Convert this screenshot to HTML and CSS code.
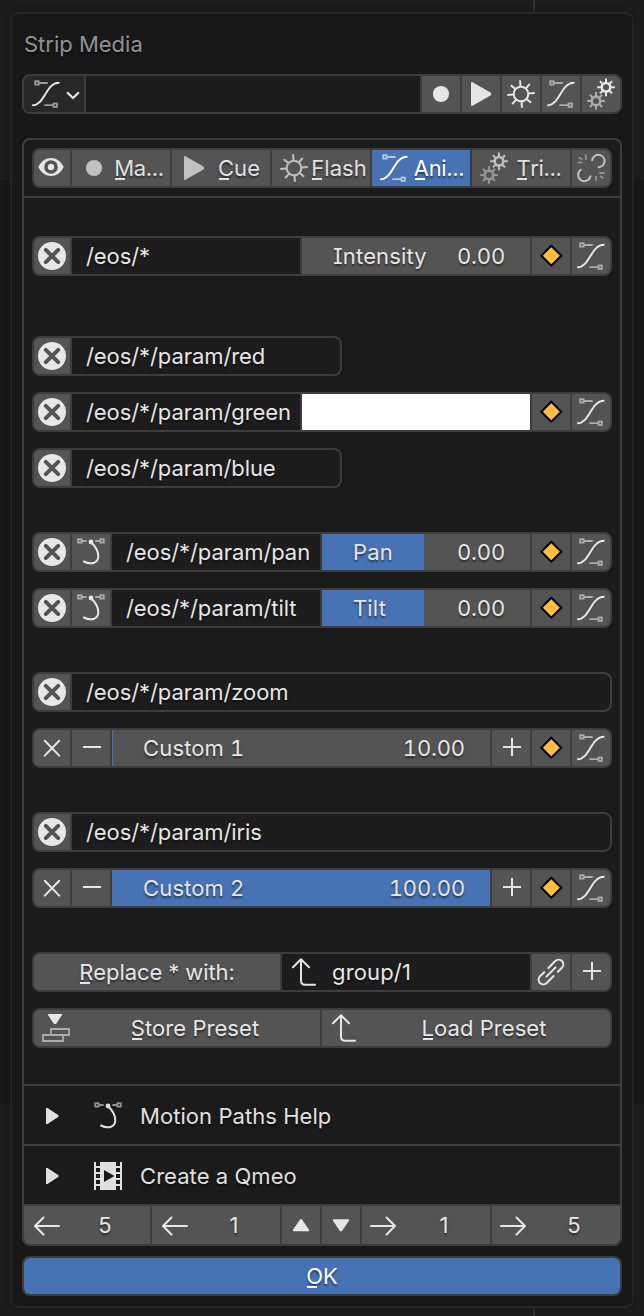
FILE: index.html
```html
<!DOCTYPE html>
<html lang="en">
<head>
<meta charset="utf-8">
<title>Strip Media</title>
<link rel="stylesheet" href="styles.css">
</head>
<body>
<svg class="defs" aria-hidden="true">
  <symbol id="curve" viewBox="0 0 38 36">
    <g class="dim"><rect x="8.2" y="5.2" width="3.4" height="3.4"/><path d="M12 7H20.7M17.3 29.2H26"/><rect x="26.5" y="27.5" width="3.4" height="3.4"/></g>
    <path class="line" d="M6 29.3C17 29.3 19.500 6.700 31.700 6.700"/>
  </symbol>
  <symbol id="handle" viewBox="0 0 38 36">
    <g class="dim"><rect x="6.2" y="5.2" width="3.4" height="3.4"/><path d="M10 7H14.7M23.3 7H28"/><rect x="28.4" y="5.2" width="3.4" height="3.4"/></g>
    <circle class="fill" cx="19" cy="8" r="2.4"/>
    <path class="line" d="M19 8C23 12 26.5 17.500 26.300 22.500C26 29.500 18.500 31 12 27.500"/>
  </symbol>
  <symbol id="dot" viewBox="0 0 38 36"><circle class="fill" cx="19" cy="18" r="8.100"/></symbol>
  <symbol id="play" viewBox="0 0 38 36"><path class="fill round" d="M10 7V29L28 18.700V17.300Z"/></symbol>
  <symbol id="sun" viewBox="0 0 38 36">
    <g class="line butt" transform="rotate(-4 19 18)"><circle cx="19" cy="18" r="7.300"/><path d="M19 10.500V4.200M19 25.500V31.800M11.500 18H5.200M26.500 18H32.800M13.700 12.700L9.500 8.500M24.300 12.700L28.500 8.500M13.700 23.300L9.500 27.500M24.300 23.300L28.500 27.500"/></g>
  </symbol>
  <symbol id="gears" viewBox="0 0 38 36">
    <g class="line butt"><circle cx="24" cy="11.300" r="4.300" stroke-width="2.600"/><path d="M24 6.500V2.400M24 16.100V20.200M19.200 11.300H15.100M28.800 11.300H32.900M20.600 7.900L17.900 5.200M27.400 7.900L30.100 5.200M20.600 14.700L17.900 17.400M27.400 14.700L30.100 17.400"/></g>
    <g class="line butt faded" transform="translate(-10 13.600)"><circle cx="24" cy="11.300" r="4.300" stroke-width="2.600"/><path d="M24 6.500V2.400M24 16.100V20.200M19.200 11.300H15.100M28.800 11.300H32.900M20.600 7.900L17.900 5.200M27.400 7.900L30.100 5.200M20.600 14.700L17.900 17.400M27.400 14.700L30.100 17.400"/></g>
  </symbol>
  <symbol id="unlinked" viewBox="0 0 38 36">
    <path class="line" d="M20.200 10.300A6.200 6.200 0 1 1 26.500 17.200M8.800 19.800A6.200 6.200 0 1 0 18.400 26.200"/>
    <path class="dim" d="M5.700 12.700H10.300M7 7.300L10.300 9.700M13.600 4.300L14 9.700M27.300 23H32.700M28 26L31.300 28.300M24 26V31"/>
  </symbol>
  <symbol id="eye" viewBox="0 0 36 36">
    <path class="fill" d="M4.300 17C10 5 24 5 29.700 17C24 29 10 29 4.300 17Z"/><circle class="hole" cx="17" cy="17" r="6.800"/><circle class="fill" cx="17" cy="17" r="3.200"/>
  </symbol>
  <symbol id="cancel" viewBox="0 0 36 36"><circle class="fill" cx="18" cy="18" r="14"/><path class="cross" d="M11.800 11.800L24.200 24.200M24.200 11.800L11.800 24.200"/></symbol>
  <symbol id="close" viewBox="0 0 36 36"><path class="line" d="M10.800 10.800L25.200 25.600M25.200 10.800L10.800 25.600"/></symbol>
  <symbol id="minus" viewBox="0 0 38 36"><path class="line butt" d="M11 17H29"/></symbol>
  <symbol id="plus" viewBox="0 0 38 36"><path class="line butt" d="M11 17H29M20 8V26"/></symbol>
  <symbol id="key" viewBox="0 0 38 36"><path class="key" d="M19.300 7.700L29.300 17.700L19.300 27.700L9.300 17.700Z"/></symbol>
  <symbol id="turn" viewBox="0 0 38 36"><path class="line" d="M11 13.300L19 5.200L27 13.300M19 5.500V26.500Q19 30.800 23.300 30.800H33"/></symbol>
  <symbol id="link" viewBox="0 0 38 36"><g class="line" transform="translate(19 18) rotate(-45)"><path d="M-6.500 0H6.500M1 -4.700H10.800A4.700 4.700 0 0 1 10.800 4.700H5M-1 4.700H-10.800A4.700 4.700 0 0 1 -10.800 -4.700H-5"/></g></symbol>
  <symbol id="store" viewBox="0 0 36 36"><path class="fill" d="M14 4H28V5L22 14H20L14 5Z"/><path class="dim" d="M17 24V19H35V25H30M9 25H29V31H9Z"/></symbol>
  <symbol id="film" viewBox="0 0 28 28"><path class="fill" d="M0 0H2V4H6V0H22V4H26V0H28V28H26V24H22V28H6V24H2V28H0ZM2 6V10H6V6ZM2 12V16H6V12ZM2 18V22H6V18ZM22 6V10H26V6ZM22 12V16H26V12ZM22 18V22H26V18ZM10 8V20L20.500 14Z" fill-rule="evenodd"/></symbol>
  <symbol id="left" viewBox="0 0 36 38"><path class="line" d="M35 20H11M19.500 11.500L11 20L19.500 28.500"/></symbol>
  <symbol id="right" viewBox="0 0 36 38"><path class="line" d="M9 20H33M24.500 11.500L33 20L24.500 28.500"/></symbol>
  <symbol id="up" viewBox="0 0 38 38"><path class="fill" d="M11 25.300V23.800L18.200 13.300H19.800L27 23.800V25.300Z"/></symbol>
  <symbol id="down" viewBox="0 0 38 38"><path class="fill" d="M11 13.300V14.800L18.200 25.300H19.800L27 14.800V13.300Z"/></symbol>
  <symbol id="disclose" viewBox="0 0 14 16"><path class="fill" d="M0 0H1.500L12.500 7.200V8.800L1.500 16H0Z"/></symbol>
  <symbol id="chevron" viewBox="0 0 14 10"><path class="line thick" d="M1.800 2L7 7L12.200 2"/></symbol>
</svg>

<div class="backdrop">
<main class="dialog">
  <h1 class="title">Strip Media</h1>

  <div class="row name-row">
    <div class="cell dropdown"><svg class="ico"><use href="#curve"/></svg><svg class="chev"><use href="#chevron"/></svg></div>
    <div class="cell field"></div>
    <div class="cell sq"><svg class="ico"><use href="#dot"/></svg></div>
    <div class="cell sq"><svg class="ico"><use href="#play"/></svg></div>
    <div class="cell sq"><svg class="ico"><use href="#sun"/></svg></div>
    <div class="cell sq"><svg class="ico"><use href="#curve"/></svg></div>
    <div class="cell sq"><svg class="ico"><use href="#gears"/></svg></div>
  </div>

  <section class="box">
    <div class="tabs-wrap">
      <div class="row">
        <div class="cell first"><svg class="ico edge"><use href="#eye"/></svg></div>
        <div class="cell tab clipped"><svg class="ico"><use href="#dot"/></svg><span><u>M</u>a...</span></div>
        <div class="cell tab"><svg class="ico"><use href="#play"/></svg><span><u>C</u>ue</span></div>
        <div class="cell tab"><svg class="ico"><use href="#sun"/></svg><span><u>F</u>lash</span></div>
        <div class="cell tab clipped active"><svg class="ico"><use href="#curve"/></svg><span><u>A</u>ni...</span></div>
        <div class="cell tab clipped"><svg class="ico"><use href="#gears"/></svg><span><u>T</u>ri...</span></div>
        <div class="cell sq muted"><svg class="ico"><use href="#unlinked"/></svg></div>
      </div>
    </div>

    <div class="params">
      <div class="group spaced">
        <div class="row">
          <div class="cell first"><svg class="ico edge"><use href="#cancel"/></svg></div>
          <div class="cell field">/eos/*</div>
          <div class="cell slider w228"><span>Intensity</span><span class="value">0.00</span></div>
          <div class="cell sq"><svg class="ico"><use href="#key"/></svg></div>
          <div class="cell sq"><svg class="ico"><use href="#curve"/></svg></div>
        </div>
      </div>

      <div class="group">
        <div class="row short">
          <div class="cell first"><svg class="ico edge"><use href="#cancel"/></svg></div>
          <div class="cell field">/eos/*/param/red</div>
        </div>
        <div class="row">
          <div class="cell first"><svg class="ico edge"><use href="#cancel"/></svg></div>
          <div class="cell field">/eos/*/param/green</div>
          <div class="cell swatch w228"></div>
          <div class="cell sq"><svg class="ico"><use href="#key"/></svg></div>
          <div class="cell sq"><svg class="ico"><use href="#curve"/></svg></div>
        </div>
        <div class="row short">
          <div class="cell first"><svg class="ico edge"><use href="#cancel"/></svg></div>
          <div class="cell field">/eos/*/param/blue</div>
        </div>
      </div>

      <div class="group">
        <div class="row">
          <div class="cell first"><svg class="ico edge"><use href="#cancel"/></svg></div>
          <div class="cell sq"><svg class="ico"><use href="#handle"/></svg></div>
          <div class="cell field">/eos/*/param/pan</div>
          <div class="cell slider w208 half"><span>Pan</span><span class="value">0.00</span></div>
          <div class="cell sq"><svg class="ico"><use href="#key"/></svg></div>
          <div class="cell sq"><svg class="ico"><use href="#curve"/></svg></div>
        </div>
        <div class="row">
          <div class="cell first"><svg class="ico edge"><use href="#cancel"/></svg></div>
          <div class="cell sq"><svg class="ico"><use href="#handle"/></svg></div>
          <div class="cell field">/eos/*/param/tilt</div>
          <div class="cell slider w208 half"><span>Tilt</span><span class="value">0.00</span></div>
          <div class="cell sq"><svg class="ico"><use href="#key"/></svg></div>
          <div class="cell sq"><svg class="ico"><use href="#curve"/></svg></div>
        </div>
      </div>

      <div class="group">
        <div class="row">
          <div class="cell first"><svg class="ico edge"><use href="#cancel"/></svg></div>
          <div class="cell field">/eos/*/param/zoom</div>
        </div>
        <div class="row">
          <div class="cell first"><svg class="ico edge"><use href="#close"/></svg></div>
          <div class="cell sq"><svg class="ico"><use href="#minus"/></svg></div>
          <div class="cell slider grow sliver"><span>Custom 1</span><span class="value">10.00</span></div>
          <div class="cell sq"><svg class="ico"><use href="#plus"/></svg></div>
          <div class="cell sq"><svg class="ico"><use href="#key"/></svg></div>
          <div class="cell sq"><svg class="ico"><use href="#curve"/></svg></div>
        </div>
      </div>

      <div class="group">
        <div class="row">
          <div class="cell first"><svg class="ico edge"><use href="#cancel"/></svg></div>
          <div class="cell field">/eos/*/param/iris</div>
        </div>
        <div class="row">
          <div class="cell first"><svg class="ico edge"><use href="#close"/></svg></div>
          <div class="cell sq"><svg class="ico"><use href="#minus"/></svg></div>
          <div class="cell slider grow full"><span>Custom 2</span><span class="value">100.00</span></div>
          <div class="cell sq"><svg class="ico"><use href="#plus"/></svg></div>
          <div class="cell sq"><svg class="ico"><use href="#key"/></svg></div>
          <div class="cell sq"><svg class="ico"><use href="#curve"/></svg></div>
        </div>
      </div>

      <div class="group">
        <div class="row">
          <div class="cell label"><span><u>R</u>eplace * with:</span></div>
          <div class="cell field with-icon"><svg class="ico"><use href="#turn"/></svg><span>group/1</span></div>
          <div class="cell sq"><svg class="ico"><use href="#link"/></svg></div>
          <div class="cell sq"><svg class="ico"><use href="#plus"/></svg></div>
        </div>
        <div class="row">
          <div class="cell action store"><svg class="ico edge"><use href="#store"/></svg><span><u>S</u>tore Preset</span></div>
          <div class="cell action load"><svg class="ico"><use href="#turn"/></svg><span><u>L</u>oad Preset</span></div>
        </div>
      </div>
    </div>

    <div class="panel"><svg class="disclose"><use href="#disclose"/></svg><svg class="ico"><use href="#handle"/></svg><span>Motion Paths Help</span></div>
    <div class="panel"><svg class="disclose"><use href="#disclose"/></svg><svg class="film"><use href="#film"/></svg><span>Create a Qmeo</span></div>

    <div class="nav">
      <div class="cell"><svg class="arrow"><use href="#left"/></svg><span>5</span></div>
      <div class="cell"><svg class="arrow"><use href="#left"/></svg><span>1</span></div>
      <div class="cell"><svg class="tri"><use href="#up"/></svg></div>
      <div class="cell"><svg class="tri"><use href="#down"/></svg></div>
      <div class="cell"><svg class="arrow"><use href="#right"/></svg><span>1</span></div>
      <div class="cell"><svg class="arrow"><use href="#right"/></svg><span>5</span></div>
    </div>
  </section>

  <div class="row ok"><div class="cell active"><span><u>O</u>K</span></div></div>
</main>
</div>
</body>
</html>
```
FILE: styles.css
```css
* { box-sizing: border-box; }

body {
  margin: 0;
  background: #1d1d1d;
  font-family: Inter, "Liberation Sans", sans-serif;
  font-size: 22px;
  line-height: 36px;
  letter-spacing: 0.06px;
  font-feature-settings: "cv08";
  color: #e0e0e0;
}

.defs { position: absolute; width: 0; height: 0; }

.backdrop {
  height: 1316px;
  padding: 12px 10px 8px;
  background:
    linear-gradient(#333, #333) 533px 0 / 2px 12px no-repeat,
    linear-gradient(#333, #333) 533px 100% / 2px 8px no-repeat,
    linear-gradient(#1d1d1d 180px, #181818 180px, #181818 1104px, #1d1d1d 1104px);
}

.dialog {
  height: 1296px;
  padding: 0 10px;
  border: 2px solid #242424;
  border-radius: 8px;
  background: #181818;
  box-shadow: 0 0 8px rgba(0, 0, 0, 0.3);
}

.title {
  margin: 12px 2px;
  font-size: 22px;
  font-weight: 400;
  letter-spacing: 0;
  color: #929292;
  text-shadow: 0 2px 2px rgba(0, 0, 0, 0.6);
}

/* Aligned row of widgets sharing one outline */
.row {
  display: flex;
  gap: 2px;
  height: 40px;
  border: 2px solid #3d3d3d;
  border-radius: 8px;
  background: #3d3d3d;
  overflow: hidden;
}

.name-row { margin-bottom: 24px; }
.row.short { width: 310px; }

.cell {
  display: flex;
  flex: none;
  background: #545454;
  color: #e6e6e6;
  text-shadow: 0 2px 2px rgba(0, 0, 0, 0.5);
  white-space: nowrap;
}

.first { width: 36px; }
.sq { width: 38px; }
.tab { width: 98px; color: #c0c0c0; }
.w228 { width: 228px; }
.w208 { width: 208px; }
.grow { flex: 1; }
.field { flex: 1; min-width: 0; padding-left: 14px; background: #1d1d1d; letter-spacing: -0.08px; }
.dropdown { width: 60px; padding-left: 3px; align-items: center; background: #282828; }
.swatch { background: #fff; }
.muted { color: #c0c0c0; }
.active { background: #4772b3; color: #fff; }

.ico { flex: none; width: 38px; height: 36px; }
.ico.edge { width: 36px; }
.chev { width: 14px; height: 10px; margin: 4px 0 0 1px; }

.tab .ico { margin: 0 -5px 0 3px; }
.tab span { flex: 1; text-align: center; color: #e0e0e0; }
.tab.active span { color: #fff; }
.clipped span { letter-spacing: -0.35px; }

.slider { justify-content: space-between; padding: 0 25px 0 31px; letter-spacing: 0.15px; font-feature-settings: "cv08", "tnum"; }
.value { letter-spacing: -0.15px; }
.half { background: linear-gradient(90deg, #4772b3 102px, #545454 102px); }
.sliver { background: linear-gradient(90deg, #4772b3 1px, #545454 1px); }
.full { background: #4772b3; }

.label { width: 246px; justify-content: center; letter-spacing: -0.08px; }
.with-icon { padding-left: 0; letter-spacing: 0.15px; }
.with-icon span { margin-left: 12px; }

.action span { flex: 1; text-align: center; }
.store { width: 286px; }
.load { flex: 1; }
.load .ico { margin-right: -2px; }

/* Keyboard mnemonic under the first letter */
u { position: relative; text-decoration: none; }
u::after {
  content: "";
  position: absolute;
  left: 1px;
  bottom: 1px;
  width: 10px;
  height: 2px;
  background: currentColor;
}

.box {
  border: 2px solid #3d3d3d;
  border-radius: 8px;
  background: #1b1b1b;
  overflow: hidden;
}

.tabs-wrap { padding: 8px; border-bottom: 2px solid #3d3d3d; }

.params {
  display: flex;
  flex-direction: column;
  gap: 44px;
  padding: 38px 8px 36px;
}

.group { display: flex; flex-direction: column; gap: 16px; }
.spaced { margin-bottom: 16px; }

.panel {
  display: flex;
  align-items: center;
  height: 60px;
  padding: 2px 0 0 22px;
  border-top: 2px solid #3d3d3d;
  text-shadow: 0 2px 2px rgba(0, 0, 0, 0.6);
}

.disclose { width: 14px; height: 16px; }
.panel .ico { margin: 0 13px 0 29px; }
.film { width: 28px; height: 28px; margin: 0 18px 0 34px; }

.nav {
  display: grid;
  grid-template-columns: 126px 128px 38px 38px 128px 128px;
  gap: 2px;
  border-top: 2px solid #3d3d3d;
  background: #3d3d3d;
}
.nav .cell { height: 38px; line-height: 38px; }
.nav span { flex: 1; text-align: center; }
.arrow { width: 36px; height: 38px; }
.tri { width: 38px; height: 38px; }

.ok { margin-top: 10px; }
.ok .cell { flex: 1; justify-content: center; }

/* Icon strokes follow the widget text colour */
svg { color: inherit; }
.fill { fill: currentColor; }
.round { stroke: currentColor; stroke-width: 2; stroke-linejoin: round; }
.line { fill: none; stroke: currentColor; stroke-width: 2; stroke-linecap: round; stroke-linejoin: round; }
.butt { stroke-linecap: butt; }
.thick { stroke-width: 2.4; }
.dim { fill: none; stroke: currentColor; stroke-width: 1.8; opacity: 0.6; }
.faded { opacity: 0.6; }
.hole { fill: #545454; }
.cross { fill: none; stroke: #545454; stroke-width: 4; stroke-linecap: round; }
.key { fill: #ffbd40; stroke: #000; stroke-width: 2; }
```
